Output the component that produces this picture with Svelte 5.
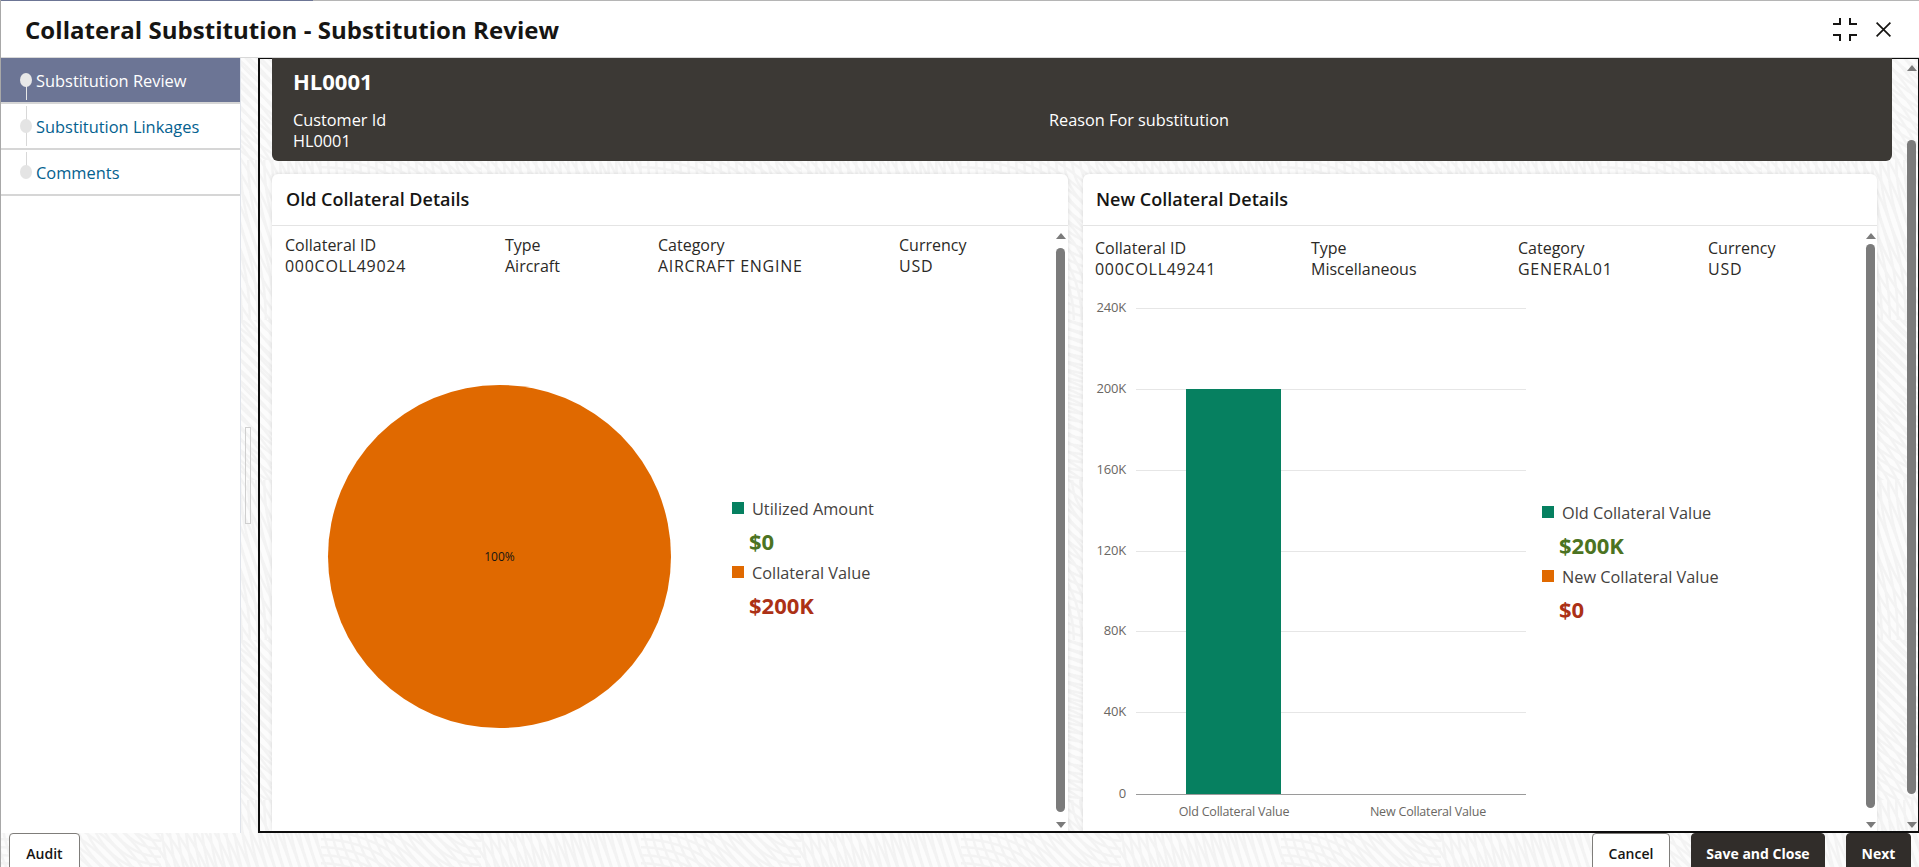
<script>
  const steps = [
    { label: 'Substitution Review', active: true },
    { label: 'Substitution Linkages', active: false },
    { label: 'Comments', active: false }
  ];
  const ticks = [
    { label: '240K', y: 309 },
    { label: '200K', y: 390 },
    { label: '160K', y: 471 },
    { label: '120K', y: 552 },
    { label: '80K', y: 632 },
    { label: '40K', y: 713 }
  ];
  const oldInfo = [
    { k: 'Collateral ID', v: '000COLL49024', w: 220, caps: true },
    { k: 'Type', v: 'Aircraft', w: 153 },
    { k: 'Category', v: 'AIRCRAFT ENGINE', w: 241, caps: true },
    { k: 'Currency', v: 'USD', w: 100, caps: true }
  ];
  const newInfo = [
    { k: 'Collateral ID', v: '000COLL49241', w: 216, caps: true },
    { k: 'Type', v: 'Miscellaneous', w: 207 },
    { k: 'Category', v: 'GENERAL01', w: 190, caps: true },
    { k: 'Currency', v: 'USD', w: 100, caps: true }
  ];
</script>

{#snippet scrollbar(kind)}
  <div class="sb {kind}">
    <span class="arrow up"></span>
    <span class="thumb"></span>
    <span class="arrow down"></span>
  </div>
{/snippet}

{#snippet info(rows)}
  <div class="info">
    {#each rows as r}
      <div class="cell" style="width:{r.w}px"><div>{r.k}</div><div class:caps={r.caps}>{r.v}</div></div>
    {/each}
  </div>
{/snippet}

{#snippet legend(a, av, b, bv)}
  <div class="legend">
    <div class="lg"><i class="sq green"></i>{a}</div>
    <div class="val pos">{av}</div>
    <div class="lg"><i class="sq orange"></i>{b}</div>
    <div class="val neg">{bv}</div>
  </div>
{/snippet}

<div class="page">
  <div class="topline"><span></span></div>
  <header class="head">
    <h1>Collateral Substitution - Substitution Review</h1>
    <div class="tools">
      <svg width="24" height="23" viewBox="0 0 24 23" fill="none" stroke="#161513" stroke-width="2">
        <path d="M0 6H7V0M17 0V6H24M0 17H7V23M17 23V17H24"/>
      </svg>
      <svg width="15" height="15" viewBox="0 0 15 15" fill="none" stroke="#161513" stroke-width="1.7">
        <path d="M.6 .6L14.4 14.4M14.4 .6L.6 14.4"/>
      </svg>
    </div>
  </header>

  <div class="body">
    <nav class="side">
      {#each steps as s, i}
        <div class="step" class:active={s.active}>
          {#if i > 0}<span class="line before"></span>{/if}
          {#if i < steps.length - 1}<span class="line after"></span>{/if}
          <span class="dot"></span>
          <span class="lbl">{s.label}</span>
        </div>
      {/each}
    </nav>
    <div class="split"><span></span></div>
    <main class="frame">
      <div class="scroll">
        <section class="banner">
          <h2>HL0001</h2>
          <div class="bannerrow">
            <div class="bc1"><div>Customer Id</div><div>HL0001</div></div>
            <div>Reason For substitution</div>
          </div>
        </section>
        <div class="cards">
          <section class="card oldc">
            <h3>Old Collateral Details</h3>
            <div class="cardbody">
              <div class="cardmain">
                {@render info(oldInfo)}
                <div class="piewrap">
                  <div class="pie"><span>100%</span></div>
                  {@render legend('Utilized Amount', '$0', 'Collateral Value', '$200K')}
                </div>
              </div>
              {@render scrollbar('inner')}
            </div>
          </section>
          <section class="card newc">
            <h3>New Collateral Details</h3>
            <div class="cardbody">
              <div class="cardmain">
                {@render info(newInfo)}
                <div class="barwrap">
                  <svg class="chart" width="450" height="550" viewBox="1085 275 450 550">
                    {#each ticks as t}
                      <line x1="1136" x2="1526" y1={t.y + .5} y2={t.y + .5} stroke="#e6e6e6"/>
                      <text x="1126" y={t.y + 4} text-anchor="end" class="tick">{t.label}</text>
                    {/each}
                    <rect x="1186" y="390" width="95" height="405" fill="#068060"/>
                    <line x1="1136" x2="1526" y1="795.5" y2="795.5" stroke="#9a9a9a"/>
                    <text x="1126" y="799" text-anchor="end" class="tick">0</text>
                    <text x="1234" y="817" text-anchor="middle" class="cat">Old Collateral Value</text>
                    <text x="1428" y="817" text-anchor="middle" class="cat">New Collateral Value</text>
                  </svg>
                  {@render legend('Old Collateral Value', '$200K', 'New Collateral Value', '$0')}
                </div>
              </div>
              {@render scrollbar('inner second')}
            </div>
          </section>
        </div>
      </div>
      {@render scrollbar('outer')}
    </main>
  </div>

  <footer class="foot">
    <button class="btn plain audit">Audit</button>
    <div class="right">
      <button class="btn plain cancel">Cancel</button>
      <button class="btn dark save">Save and Close</button>
      <button class="btn dark next">Next</button>
    </div>
  </footer>
</div>

<style>
  :global(body) { margin: 0; background: #fff; }
  .page {
    width: 1919px; height: 867px; overflow: hidden; display: flex; flex-direction: column;
    font-family: "Open Sans", "Noto Sans", sans-serif; color: #161513; box-sizing: border-box;
    border-left: 1px solid #a8a8a8;
    background-color: #fcfcfc;
    background-image:
      repeating-radial-gradient(circle at 0 100%, #f3f3f3 0, #f3f3f3 1.5px, rgba(252,252,252,0) 2.5px, rgba(252,252,252,0) 7px, #f3f3f3 8px),
      repeating-radial-gradient(circle at 100% 0, #f3f3f3 0, #f3f3f3 1.5px, rgba(252,252,252,0) 2.5px, rgba(252,252,252,0) 7px, #f3f3f3 8px);
    background-size: 320px 320px, 320px 320px;
    background-position: 0 0, 160px 160px;
  }
  .topline { height: 1px; background: #b5b5b5; flex: none; }
  .topline span { display: block; width: 312px; height: 1px; background: #6c7595; }
  .head {
    height: 56px; flex: none; background: #fff; display: flex; align-items: center;
    justify-content: space-between; padding: 0 28px 0 24px; border-bottom: 1px solid #d8d8d8; box-sizing: content-box;
  }
  h1 { margin: 0; font-size: 24px; font-weight: 700; letter-spacing: .05px; color: #161513; }
  .tools { display: flex; align-items: center; gap: 19px; }
  .body { height: 775px; flex: none; display: flex; min-height: 0; }
  .side { width: 239px; flex: none; background: #fff; border-right: 1px solid #dfe3ea; }
  .step {
    position: relative; height: 44px; border-bottom: 2px solid #d6d6d6; display: flex; align-items: center;
    padding-left: 19px; gap: 4px; color: #04618f; font-size: 16.4px; box-sizing: content-box;
  }
  .step.active { background: #6c7595; color: #fff; }
  .dot {
    width: 12px; height: 14px; border-radius: 50%; background: #e4e4e4; flex: none;
    position: relative; z-index: 1;
  }
  .step.active .dot { background: #e8e8e8; }
  .line { position: absolute; left: 25px; width: 1px; background: #d8d8d8; }
  .line.before { top: 2px; height: 15px; }
  .line.after { bottom: 2px; height: 15px; }
  .step.active .line { background: #e8e8e8; }
  .split { width: 17px; flex: none; position: relative; }
  .split span {
    position: absolute; left: 4px; top: 369px; width: 4px; height: 95px; border: 1px solid #cfcfcf;
  }
  .frame {
    flex: 1; min-width: 0; display: flex; border-left: 2px solid #0e0e0e; border-bottom: 2px solid #0e0e0e;
    border-right: 1px solid #0e0e0e; border-top: 1px solid #0e0e0e; box-sizing: border-box; height: 775px;
  }
  .scroll { flex: 1; min-width: 0; padding-left: 12px; display: flex; flex-direction: column; gap: 13px; }
  .banner {
    margin: -1px 15px 0 0; height: 103px; flex: none; background: #3c3935; color: #fff;
    border-radius: 0 0 6px 6px; padding: 10px 21px 0; box-sizing: border-box;
  }
  h2 { margin: 0; font-size: 22px; font-weight: 700; line-height: 27px; }
  .bannerrow { display: flex; margin-top: 15px; font-size: 16.3px; line-height: 21px; }
  .bc1 { width: 756px; }
  .cards { display: flex; gap: 15px; flex: 1; min-height: 0; }
  .card {
    background: #fff; border-radius: 6px 6px 0 0; display: flex; flex-direction: column; flex: none;
    box-shadow: 0 0 4px rgba(0,0,0,.12);
  }
  .oldc { width: 796px; }
  .newc { width: 794px; }
  h3 {
    margin: 0; height: 52px; flex: none; box-sizing: border-box; border-bottom: 1px solid #e4e4e4;
    font-size: 18px; font-weight: 600; line-height: 50px; padding-left: 13px; color: #161513;
  }
  .oldc h3 { padding-left: 14px; }
  .cardbody { flex: 1; display: flex; min-height: 0; }
  .cardmain { flex: 1; min-width: 0; display: flex; flex-direction: column; }
  .info { display: flex; padding: 9px 0 0 13px; font-size: 16px; line-height: 21px; color: #2b2926; }
  .newc .info { padding: 12px 0 0 12px; }
  .cell { flex: none; }
  .caps { letter-spacing: .72px; }
  .piewrap { flex: 1; display: flex; align-items: flex-start; padding: 108px 0 0 56px; }
  .pie {
    width: 343px; height: 343px; border-radius: 50%; background: #e06900; display: flex; flex: none;
    align-items: center; justify-content: center; font-size: 12px; color: #161513;
  }
  .piewrap .legend { margin: 114px 0 0 61px; }
  .legend { color: #45423e; }
  .lg { display: flex; align-items: center; font-size: 16.3px; line-height: 21px; height: 21px; }
  .sq { width: 12px; height: 12px; margin-right: 8px; flex: none; position: relative; top: -2px; }
  .green { background: #068060; }
  .orange { background: #e06900; }
  .val { font-size: 22px; font-weight: 700; line-height: 27px; padding: 8px 0 8px 17px; height: 27px; box-sizing: content-box; }
  .pos { color: #4c7322; }
  .neg { color: #ac3116; }
  .barwrap { flex: 1; display: flex; align-items: flex-start; padding: 0 0 0 2px; }
  .chart { display: block; flex: none; margin-top: -6px; }
  .barwrap .legend { margin: 223px 0 0 7px; }
  .tick { font-size: 13px; fill: #6a6763; font-family: "Open Sans", sans-serif; letter-spacing: -0.2px; }
  .cat { font-size: 12.5px; fill: #6a6763; font-family: "Open Sans", sans-serif; letter-spacing: -0.2px; }
  .sb { width: 9px; flex: none; display: flex; flex-direction: column; align-items: center; }
  .sb.inner { margin-right: 3px; padding: 7px 0 3px; }
  .sb.second { margin-right: 2px; }
  .sb.outer { margin: 0 2px 0 0; padding: 6px 0 3px; }
  .thumb { width: 9px; background: #7b7b7b; border-radius: 5px; display: block; }
  .arrow { width: 0; height: 0; border-left: 5px solid transparent; border-right: 5px solid transparent; flex: none; }
  .arrow.up { border-bottom: 6px solid #7b7b7b; }
  .arrow.down { border-top: 6px solid #7b7b7b; }
  .inner .thumb { height: 564px; margin: 9px 0 auto; }
  .second .thumb { height: 564px; margin: 5px 0 auto; }
  .outer .thumb { height: 654px; margin: 69px 0 auto; }
  .foot { flex: 1; min-height: 0; display: flex; justify-content: space-between; padding-left: 8px; }
  .right { display: flex; margin-right: 8px; }
  .btn {
    font-family: inherit; font-size: 14px; font-weight: 600; height: 40px; border-radius: 4px 4px 0 0;
    box-sizing: border-box; padding: 0; cursor: pointer;
  }
  .plain { background: #fff; border: 1px solid #7f7d7a; color: #161513; }
  .dark { background: #312d2a; border: 1px solid #312d2a; color: #fff; font-weight: 700; }
  .audit { width: 71px; }
  .cancel { width: 78px; margin-right: 21px; }
  .save { width: 134px; margin-right: 21px; }
  .next { width: 65px; }
</style>
